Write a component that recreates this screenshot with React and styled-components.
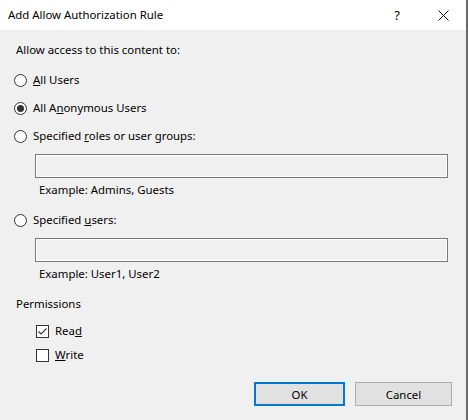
import React from 'react';
import styled, { createGlobalStyle } from 'styled-components';

const GlobalStyle = createGlobalStyle`
  html, body {
    margin: 0;
    padding: 0;
    background: #ffffff;
  }
  body {
    font-family: "Noto Sans", "Open Sans", sans-serif;
    font-size: 11.4px;
    color: #000;
  }
`

const Window = styled.div`
  width: 468px;
  height: 420px;
  box-sizing: border-box;
  display: flex;
  flex-direction: column;
  border-right: 2px solid #6b6b6b;
  overflow: hidden;
`
const TitleBar = styled.div`
  height: 30px;
  flex: none;
  display: flex;
  align-items: center;
  background: #ffffff;
  padding-left: 8px;
`
const Title = styled.div`
  flex: 1;
  line-height: 16px;
`
const TitleButton = styled.div`
  width: 46px;
  height: 30px;
  display: flex;
  align-items: center;
  justify-content: center;
  font-size: 13px;
`
const Body = styled.div`
  flex: 1;
  display: flex;
  flex-direction: column;
  align-items: flex-start;
  background: #f0f0f0;
  padding: 12px 14px 14px 14px;
`
const Text = styled.div`
  line-height: 16px;
  height: 16px;
  white-space: nowrap;
  margin-top: ${p => p.$top || 0}px;
  margin-left: ${p => p.$left || 0}px;
`
const OptionRow = styled.label`
  display: flex;
  align-items: center;
  gap: ${p => p.$gap || 6}px;
  height: 16px;
  line-height: 16px;
  margin-top: ${p => p.$top || 0}px;
  margin-left: ${p => p.$left || 0}px;
  white-space: nowrap;
`
const RadioCircle = styled.span`
  width: 13px;
  height: 13px;
  box-sizing: border-box;
  border-radius: 50%;
  border: 1px solid #333;
  background: #fff;
  display: flex;
  align-items: center;
  justify-content: center;
  &::after {
    content: '';
    width: 7px;
    height: 7px;
    border-radius: 50%;
    background: #333;
    display: ${p => (p.$checked ? 'block' : 'none')};
  }
`
const CheckBox = styled.span`
  width: 13px;
  height: 13px;
  box-sizing: border-box;
  border: 1px solid #333;
  background: #fff;
  display: flex;
  align-items: center;
  justify-content: center;
`
const TextBox = styled.div`
  width: 413px;
  height: 24px;
  box-sizing: border-box;
  border: 1px solid #7a7a7a;
  box-shadow: inset 0 0 0 1px #fff;
  background: #f0f0f0;
  margin-top: 10px;
  margin-left: 21px;
`
const ButtonRow = styled.div`
  margin-top: auto;
  align-self: flex-end;
  display: flex;
  gap: 10px;
`
const Button = styled.button`
  width: ${p => p.$width}px;
  height: 24px;
  box-sizing: border-box;
  background: #e1e1e1;
  border: ${p => (p.$default ? '2px solid #0078d7' : '1px solid #adadad')};
  font-family: inherit;
  font-size: 11.4px;
  color: #000;
  padding: 0;
`

const Radio = ({ checked, top, children }) => (
  <OptionRow $top={top}>
    <RadioCircle $checked={checked} />
    <span>{children}</span>
  </OptionRow>
)

const Check = ({ checked, top, children }) => (
  <OptionRow $top={top} $left={22} $gap={6}>
    <CheckBox>
      {checked && (
        <svg width="11" height="11" viewBox="0 0 11 11">
          <path d="M1.5 5.5 L4 8 L9.5 2.5" fill="none" stroke="#333" strokeWidth="1.1" />
        </svg>
      )}
    </CheckBox>
    <span>{children}</span>
  </OptionRow>
)

const App = () => {
  return (
    <Window>
      <GlobalStyle />
      <TitleBar>
        <Title>Add Allow Authorization Rule</Title>
        <TitleButton>?</TitleButton>
        <TitleButton>
          <svg width="11" height="11" viewBox="0 0 11 11">
            <path d="M0.5 0.5 L10.5 10.5 M10.5 0.5 L0.5 10.5" stroke="#111" strokeWidth="1" />
          </svg>
        </TitleButton>
      </TitleBar>
      <Body>
        <Text $left={2}>Allow access to this content to:</Text>
        <Radio top={14}><u>A</u>ll Users</Radio>
        <Radio top={12} checked>All A<u>n</u>onymous Users</Radio>
        <Radio top={12}>Specified <u>r</u>oles or user groups:</Radio>
        <TextBox />
        <Text $top={4} $left={25}>Example: Admins, Guests</Text>
        <Radio top={14}>Specified <u>u</u>sers:</Radio>
        <TextBox />
        <Text $top={4} $left={25}>Example: User1, User2</Text>
        <Text $top={14} $left={2}>Permissions</Text>
        <Check top={11} checked>Rea<u>d</u></Check>
        <Check top={8}><u>W</u>rite</Check>
        <ButtonRow>
          <Button $width={91} $default>OK</Button>
          <Button $width={97}>Cancel</Button>
        </ButtonRow>
      </Body>
    </Window>
  );
}

export default App;
